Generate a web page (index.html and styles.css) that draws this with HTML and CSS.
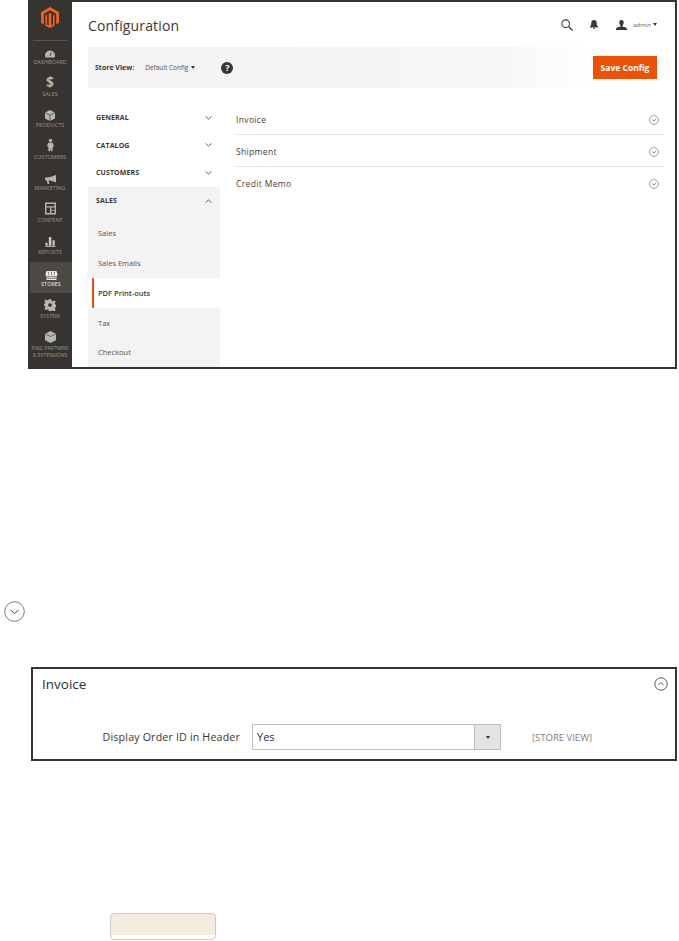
FILE: index.html
```html
<!DOCTYPE html>
<html lang="en">
<head>
    <meta charset="UTF-8">
    <meta name="viewport" content="width=device-width, initial-scale=1.0">
    <title>Configuration</title>
    <link rel="stylesheet" href="styles.css">
</head>
<body>
    <div class="admin-shot">
        <div class="sidebar">
            <div class="logo">
                <svg width="18" height="21" viewBox="0 0 18 21"><path d="M9 0 18 5.200V15.800L15.200 17.400V6.800L9 3.200 2.800 6.800V17.400L0 15.800V5.200Z" fill="#f26322"/><path d="M7.700 6.700 9 6l1.300.7V18.500L12 17.500V7.600l1.600.9V18.400L9 21 4.400 18.400V8.500L6 7.600v9.900L7.700 18.500Z" fill="#f26322"/></svg>
            </div>
            <div class="side-item item-dashboard">
                <svg width="10" height="8" viewBox="0 0 14 10"><path d="M7 0a7 7 0 0 0-7 7c0 1.200.3 2.200.8 3h12.400c.5-.8.8-1.800.8-3a7 7 0 0 0-7-7Zm.9 7.500H6.100l2.400-5 .6.200Z" fill="#b8b4b0"/></svg>
                <span>Dashboard</span>
            </div>
            <div class="side-item item-sales">
                <span class="dollar">$</span>
                <span>Sales</span>
            </div>
            <div class="side-item item-products">
                <svg width="10" height="11" viewBox="0 0 12 13"><path d="M6 0 12 3v7l-6 3-6-3V3Z" fill="#b8b4b0"/><path d="M0 3l6 3 6-3M6 6v7" stroke="#373330" fill="none" stroke-width=".8"/></svg>
                <span>Products</span>
            </div>
            <div class="side-item item-customers">
                <svg width="7" height="14" viewBox="0 0 9 16"><circle cx="4.500" cy="2.200" r="2.200" fill="#b8b4b0"/><path d="M1.500 5h6L9 10H7.400l-.4 6H5l-.5-4-.5 4H2l-.4-6H0Z" fill="#b8b4b0"/></svg>
                <span>Customers</span>
            </div>
            <div class="side-item item-marketing">
                <svg width="11" height="9" viewBox="0 0 15 12"><path d="M15 0v10L7 7.500H5L6 12H3.500L2.300 7.500 0 6.500V3.500L7 2.500Z" fill="#b8b4b0"/></svg>
                <span>Marketing</span>
            </div>
            <div class="side-item item-content">
                <svg width="11" height="13" viewBox="0 0 12 13"><path d="M0 0h12v13H0Zm1.500 1.500V4h9V1.500Zm0 4V11.500h4V5.500Zm5.500 0V8h3.500V5.500Zm0 3.500v2.500h3.500V9Z" fill="#b8b4b0" fill-rule="evenodd"/></svg>
                <span>Content</span>
            </div>
            <div class="side-item item-reports">
                <svg width="11" height="10" viewBox="0 0 12 12"><path d="M0 7h2.500v3.500H0ZM4 0h3v10.500H4ZM8.500 4H11v6.500H8.500ZM0 11h12v1H0Z" fill="#d0ccc8"/></svg>
                <span>Reports</span>
            </div>
            <div class="side-item item-stores active">
                <svg width="13" height="9" viewBox="0 0 15 11"><path d="M1.500 0h12L15 4.500c0 .8-.9 1.200-1.500 1.200V11h-12V5.700C.9 5.700 0 5.300 0 4.500Z" fill="#f0eeeb"/><path d="M3 6.500h9V9H3ZM4 1v3.500M7.500 1v3.500M11 1v3.500" stroke="#4d4945" fill="none" stroke-width=".9"/></svg>
                <span>Stores</span>
            </div>
            <div class="side-item item-system">
                <svg width="12" height="12" viewBox="0 0 13 13"><path d="M5.300 0h2.400l.3 1.900 1.300.6L11 1.400l1.700 1.700-1.100 1.600.5 1.300 1.900.300v2.400l-1.900.3-.5 1.300 1.100 1.600-1.700 1.700-1.600-1.100-1.400.500-.3 1.900H5.300L5 11.700l-1.300-.5-1.600 1.100L.4 10.600l1.100-1.600L1 7.700l-1-.300V5.300l1-.3.500-1.300L.4 2.100 2.100.4l1.600 1.100L5 1Z" fill="#b8b4b0"/><circle cx="6.500" cy="6.500" r="2" fill="#373330"/></svg>
                <span>System</span>
            </div>
            <div class="side-item item-partners">
                <svg width="11" height="12" viewBox="0 0 13 14"><path d="M6.500 0 13 3.200v7.600L6.500 14 0 10.800V3.200Z" fill="#b8b4b0"/><path d="M0 3.200l6.500 3.200 6.500-3.200" stroke="#373330" fill="none" stroke-width=".7"/></svg>
                <span>Find Partners<br>&amp; Extensions</span>
            </div>
        </div>

        <div class="main">
            <div class="page-header">
                <h1>Configuration</h1>
                <div class="header-actions">
                    <svg class="search-icon" width="12" height="12" viewBox="0 0 12 12"><circle cx="4.700" cy="4.700" r="3.800" fill="none" stroke="#41362f" stroke-width="1.100"/><path d="M7.500 7.500 11.500 11.500" stroke="#41362f" stroke-width="1.300"/></svg>
                    <svg class="bell-icon" width="8" height="9" viewBox="0 0 8 9"><path d="M4 0c1.800 0 2.700 1.300 2.700 3 0 2 .5 3 1.300 3.800v.7H0v-.7C.8 6 1.300 5 1.300 3 1.300 1.300 2.200 0 4 0ZM3 8h2a1 1 0 0 1-2 0Z" fill="#41362f"/></svg>
                    <svg class="user-icon" width="11" height="10" viewBox="0 0 11 10"><path d="M5.500 0C7 0 7.700 1 7.700 2.500c0 1.300-.6 2.500-1.200 3v1c1.700.5 4.500 1 4.500 2.500v1H0V9c0-1.500 2.800-2 4.500-2.500v-1c-.6-.5-1.200-1.700-1.200-3C3.300 1 4 0 5.500 0Z" fill="#41362f"/></svg>
                    <span class="user-name">admin</span>
                    <span class="caret"></span>
                </div>
            </div>

            <div class="toolbar">
                <span class="store-label">Store View:</span>
                <span class="store-value">Default Config</span>
                <span class="caret"></span>
                <span class="help">?</span>
                <button class="save-btn">Save Config</button>
            </div>

            <div class="config">
                <div class="config-nav">
                    <div class="nav-head">General <svg class="chev" width="7" height="4" viewBox="0 0 7 4"><path d="M.5.500 3.500 3 6.500.500" fill="none" stroke="#555" stroke-width=".9"/></svg></div>
                    <div class="nav-head">Catalog <svg class="chev" width="7" height="4" viewBox="0 0 7 4"><path d="M.5.500 3.500 3 6.500.500" fill="none" stroke="#555" stroke-width=".9"/></svg></div>
                    <div class="nav-head">Customers <svg class="chev" width="7" height="4" viewBox="0 0 7 4"><path d="M.5.500 3.500 3 6.500.500" fill="none" stroke="#555" stroke-width=".9"/></svg></div>
                    <div class="nav-open">
                        <div class="nav-head">Sales <svg class="chev" width="7" height="4" viewBox="0 0 7 4"><path d="M.5 3.500 3.500 1 6.500 3.500" fill="none" stroke="#555" stroke-width=".9"/></svg></div>
                        <div class="nav-sub">Sales</div>
                        <div class="nav-sub">Sales Emails</div>
                        <div class="nav-sub current">PDF Print-outs</div>
                        <div class="nav-sub">Tax</div>
                        <div class="nav-sub">Checkout</div>
                    </div>
                </div>
                <div class="sections">
                    <div class="section-row">Invoice <svg width="10" height="10" viewBox="0 0 10 10"><circle cx="5" cy="5" r="4.400" fill="none" stroke="#8a8a8a" stroke-width=".8"/><path d="M3 4.200 5 6 7 4.200" fill="none" stroke="#777" stroke-width=".8"/></svg></div>
                    <div class="section-row">Shipment <svg width="10" height="10" viewBox="0 0 10 10"><circle cx="5" cy="5" r="4.400" fill="none" stroke="#8a8a8a" stroke-width=".8"/><path d="M3 4.200 5 6 7 4.200" fill="none" stroke="#777" stroke-width=".8"/></svg></div>
                    <div class="section-row">Credit Memo <svg width="10" height="10" viewBox="0 0 10 10"><circle cx="5" cy="5" r="4.400" fill="none" stroke="#8a8a8a" stroke-width=".8"/><path d="M3 4.200 5 6 7 4.200" fill="none" stroke="#777" stroke-width=".8"/></svg></div>
                </div>
            </div>
        </div>
    </div>

    <svg class="expand-icon" width="21" height="21" viewBox="0 0 21 21"><circle cx="10.500" cy="10.500" r="9.800" fill="none" stroke="#7f7a72" stroke-width="1"/><path d="M6.500 9 10.500 12.500 14.500 9" fill="none" stroke="#444" stroke-width="1"/></svg>

    <div class="invoice-shot">
        <div class="invoice-head">
            <span>Invoice</span>
            <svg width="14" height="14" viewBox="0 0 14 14"><circle cx="7" cy="7" r="6.200" fill="none" stroke="#444" stroke-width=".9"/><path d="M4.500 8 7 5.500 9.500 8" fill="none" stroke="#444" stroke-width=".9"/></svg>
        </div>
        <div class="invoice-field">
            <label>Display Order ID in Header</label>
            <div class="select-box">
                <span class="select-value">Yes</span>
                <span class="select-btn"><span class="caret"></span></span>
            </div>
            <span class="scope">[STORE VIEW]</span>
        </div>
    </div>

    <div class="beige-btn"></div>
</body>
</html>
```

FILE: styles.css
```css
body, html {
    margin: 0;
    padding: 0;
    height: 100%;
    overflow: hidden;
}

body {
    background: #fff;
    font-family: 'Open Sans', sans-serif;
    color: #41362f;
}

.admin-shot {
    display: flex;
    width: 649px;
    height: 369px;
    margin-left: 28px;
    box-sizing: border-box;
    border: 2px solid #37332e;
    border-left: none;
    overflow: hidden;
}

.sidebar {
    width: 44px;
    flex-shrink: 0;
    background: #373330;
    color: #98948e;
    display: flex;
    flex-direction: column;
    align-items: stretch;
}

.logo {
    display: flex;
    justify-content: center;
    height: 39px;
    padding-top: 5px;
    box-sizing: border-box;
    border-bottom: 1px solid #5a5652;
    margin: 0 5px 5px;
}

.side-item {
    display: flex;
    flex-direction: column;
    align-items: center;
    justify-content: flex-end;
    gap: 1.5px;
    height: 31.6px;
    font-size: 5.5px;
    line-height: 7px;
    text-transform: uppercase;
    text-align: center;
    white-space: nowrap;
}

.item-dashboard {
    height: 20px;
}

.side-item.active {
    height: 31px;
    margin: 6px 0 0 2px;
    padding-bottom: 4.5px;
    box-sizing: border-box;
    background: #4d4945;
    color: #f0eeeb;
}

.dollar {
    font-size: 14px;
    line-height: 14px;
    font-weight: 700;
    color: #b8b4b0;
}

.item-system {
    height: 27px;
}

.item-partners {
    height: 39px;
    font-size: 5px;
}

.main {
    flex: 1;
    min-width: 0;
    padding-left: 16px;
    background: #fff;
}

.page-header {
    display: flex;
    align-items: center;
    justify-content: space-between;
    height: 45px;
    padding-right: 18px;
}

.page-header h1 {
    margin: 2px 0 0;
    font-size: 14px;
    font-weight: 400;
    letter-spacing: 0.15px;
    color: #41362f;
}

.header-actions {
    display: flex;
    align-items: center;
}

.search-icon {
    margin-right: 17px;
}

.bell-icon {
    margin-right: 18.5px;
}

.user-icon {
    margin-right: 6px;
}

.user-name {
    font-size: 6px;
    color: #6b625a;
    margin-right: 2px;
}

.caret {
    display: inline-block;
    width: 0;
    height: 0;
    border-left: 2.5px solid transparent;
    border-right: 2.5px solid transparent;
    border-top: 3px solid #41362f;
}

.toolbar {
    display: flex;
    align-items: center;
    height: 41px;
    padding: 0 1px 0 7px;
    margin-right: 17px;
    background: linear-gradient(to right, #f3f3f3, #f6f6f6 70%, #fff 90%);
}

.store-label {
    font-size: 7px;
    font-weight: 700;
    margin-right: 11px;
}

.store-value {
    font-size: 6.5px;
    color: #595048;
    margin-right: 3px;
}

.help {
    width: 12px;
    height: 12px;
    margin-left: 26px;
    border-radius: 50%;
    background: #3a3530;
    color: #fff;
    font-size: 9px;
    font-weight: 700;
    line-height: 12px;
    text-align: center;
}

.save-btn {
    margin-left: auto;
    width: 64px;
    height: 23px;
    padding: 0;
    border: none;
    background: #eb5202;
    color: #fff;
    font-family: 'Open Sans', sans-serif;
    font-size: 8.5px;
    font-weight: 700;
}

.config {
    display: flex;
    margin-top: 16px;
}

.config-nav {
    width: 132px;
    flex-shrink: 0;
}

.nav-head {
    display: flex;
    align-items: center;
    justify-content: space-between;
    height: 27.6px;
    padding: 0 8px;
    font-size: 7px;
    font-weight: 700;
    letter-spacing: 0.1px;
    text-transform: uppercase;
}

.nav-open {
    background: #f3f3f3;
}

.nav-sub {
    display: flex;
    align-items: center;
    height: 29.75px;
    padding-left: 10px;
    font-size: 7.5px;
    color: #5a5048;
}

.nav-open .nav-head + .nav-sub {
    margin-top: 4px;
}

.nav-sub.current {
    position: relative;
    background: #fff;
    font-weight: 600;
    color: #41362f;
    margin-right: -16px;
}

.nav-sub.current::before {
    content: "";
    position: absolute;
    left: 4px;
    top: 0;
    bottom: 0;
    width: 1.5px;
    background: #eb5202;
}

.sections {
    flex: 1;
    margin: -1px 11px 0 15px;
}

.section-row {
    display: flex;
    align-items: center;
    justify-content: space-between;
    height: 32px;
    padding: 2px 5px 0 1px;
    box-sizing: border-box;
    font-size: 8.5px;
    font-weight: 500;
    letter-spacing: 0.35px;
    color: #4a4038;
    border-bottom: 1px solid #e3e3e3;
}

.section-row:last-child {
    padding-top: 1px;
    border-bottom: none;
}

.expand-icon {
    display: block;
    margin: 232px 0 0 3.5px;
}

.invoice-shot {
    width: 646px;
    height: 94px;
    margin: 45px 0 0 31px;
    padding: 6px 7px 0 9px;
    box-sizing: border-box;
    border: 2px solid #37332e;
}

.invoice-head {
    display: flex;
    align-items: center;
    justify-content: space-between;
    font-size: 13.5px;
    color: #303030;
}

.invoice-field {
    display: flex;
    align-items: center;
    margin-top: 31px;
}

.invoice-field label {
    width: 198px;
    text-align: right;
    font-size: 10.7px;
    letter-spacing: 0.15px;
    color: #41362f;
}

.select-box {
    display: flex;
    width: 249px;
    height: 26px;
    margin-left: 12px;
    box-sizing: border-box;
    border: 1px solid #bdbdbd;
}

.select-value {
    flex: 1;
    padding-left: 4px;
    font-size: 11px;
    line-height: 24px;
    color: #303030;
}

.select-btn {
    display: flex;
    align-items: center;
    justify-content: center;
    width: 25px;
    background: #e3e3e3;
    border-left: 1px solid #bdbdbd;
}

.scope {
    margin-left: 31px;
    font-size: 9.5px;
    color: #808080;
}

.beige-btn {
    width: 106px;
    height: 27px;
    margin: 152px 0 0 110px;
    box-sizing: border-box;
    border: 1px solid #d3cabb;
    border-radius: 4px;
    background: linear-gradient(to bottom, #f3ebdd 85%, #fff 85%);
}
```
